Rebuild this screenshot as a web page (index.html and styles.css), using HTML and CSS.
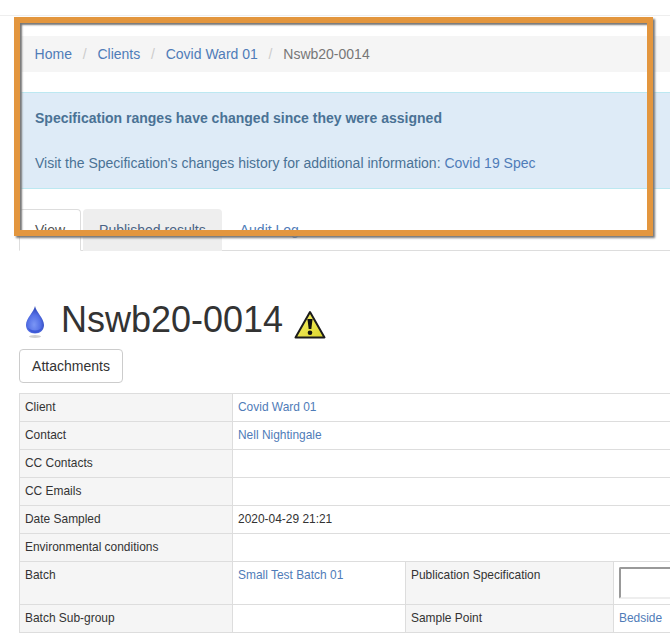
FILE: index.html
```html
<!DOCTYPE html>
<html>
<head>
<meta charset="utf-8" />
<title>Nswb20-0014</title>
<link rel="stylesheet" href="styles.css">
</head>
<body>
<div class="topline"></div>
<div class="content">
	<ol class="breadcrumb">
		<li><a href="#">Home</a></li>
		<li><a href="#">Clients</a></li>
		<li><a href="#">Covid Ward 01</a></li>
		<li class="active">Nswb20-0014</li>
	</ol>

	<div class="alert">
		<p class="alert-title">Specification ranges have changed since they were assigned</p>
		<p>Visit the Specification's changes history for additional information: <a href="#">Covid 19 Spec</a></p>
	</div>

	<ul class="tabs">
		<li class="on"><a href="#">View</a></li>
		<li class="grey"><a href="#">Published results</a></li>
		<li><a href="#">Audit Log</a></li>
	</ul>

	<h1 class="title">
		<svg class="drop" width="22" height="36" viewBox="0 0 22 36">
			<defs>
				<radialGradient id="dropfill" cx="0.45" cy="0.68" r="0.6">
					<stop offset="0" stop-color="#7b96f5" />
					<stop offset="0.6" stop-color="#5470e6" />
					<stop offset="1" stop-color="#2f48ba" />
				</radialGradient>
			</defs>
			<path d="M11 1 C12 7 20 13 20 20 C20 25 16 28.500 11 28.500 C6 28.500 2 25 2 20 C2 13 10 7 11 1 Z" fill="url(#dropfill)" />
			<path d="M3.500 22 C6 26.500 16 26.500 18.500 22 C17 26.500 14 28 11 28 C8 28 5 26.500 3.500 22 Z" fill="#3f5ad6" />
			<ellipse cx="11" cy="31.500" rx="6" ry="1.500" fill="#d0d0d0" />
		</svg>
		<span>Nswb20-0014</span>
		<svg class="warn" width="32" height="29" viewBox="0 0 32 29">
			<defs>
				<linearGradient id="warnfill" x1="0" y1="0" x2="1" y2="1">
					<stop offset="0" stop-color="#f7f06a" />
					<stop offset="1" stop-color="#dcd62c" />
				</linearGradient>
			</defs>
			<path d="M16 2 L30.500 27.500 L1.500 27.500 Z" fill="url(#warnfill)" stroke="#1c1c1c" stroke-width="2" stroke-linejoin="round" />
			<path d="M13.400 9 L18.600 9 L17.300 19 L14.700 19 Z" fill="#111" />
			<circle cx="16" cy="22.800" r="2.300" fill="#111" />
		</svg>
	</h1>

	<button class="btn">Attachments</button>

	<table class="fields">
		<colgroup><col class="c1" /><col class="c2" /><col class="c3" /><col /></colgroup>
		<tr><td class="lbl">Client</td><td colspan="3"><a href="#">Covid Ward 01</a></td></tr>
		<tr><td class="lbl">Contact</td><td colspan="3"><a href="#">Nell Nightingale</a></td></tr>
		<tr><td class="lbl">CC Contacts</td><td colspan="3"></td></tr>
		<tr><td class="lbl">CC Emails</td><td colspan="3"></td></tr>
		<tr><td class="lbl">Date Sampled</td><td colspan="3">2020-04-29 21:21</td></tr>
		<tr><td class="lbl">Environmental conditions</td><td colspan="3"></td></tr>
		<tr><td class="lbl">Batch</td><td><a href="#">Small Test Batch 01</a></td><td class="lbl">Publication Specification</td><td><input class="box" type="text" /></td></tr>
		<tr><td class="lbl">Batch Sub-group</td><td></td><td class="lbl">Sample Point</td><td><a href="#">Bedside</a></td></tr>
	</table>
</div>

<!-- orange box drawn on top of the screenshot -->
<div class="callout"></div>
</body>
</html>
```

FILE: styles.css
```css
html, body {
	margin: 0;
	height: 633px;
	overflow: hidden;
}
body {
	position: relative;
	background-color: #fff;
	font-family: "Liberation Sans", Arial, sans-serif;
	font-size: 14px;
	line-height: 20px;
	color: #333;
}
a {
	color: #4f7cb8;
	text-decoration: none;
}

.topline {
	height: 15px;
	border-bottom: 1px solid #eee;
}
.content {
	width: 860px;
	margin-left: 19px;
	padding-top: 20px;
}

.breadcrumb {
	display: flex;
	list-style: none;
	margin: 0 0 20px;
	padding: 8px 15.6px;
	height: 20px;
	background: #f5f5f5;
}
.breadcrumb li + li:before {
	content: "/";
	padding: 0 10.8px;
	color: #ccc;
}
.breadcrumb .active {
	color: #777;
}

.alert {
	height: 95px;
	background: #deebf7;
	border-top: 1px solid #bce8f1;
	border-bottom: 1px solid #bce8f1;
	color: #4a7295;
	padding: 0 16px;
}
.alert p {
	margin: 0;
}
.alert .alert-title {
	font-weight: bold;
	padding-top: 15px;
	margin-bottom: 25px;
}

.tabs {
	display: flex;
	list-style: none;
	margin: 20px 0 0;
	padding: 0;
	height: 41px;
	border-bottom: 1px solid #ddd;
}
.tabs li {
	margin-right: 2px;
	height: 42px;
}
.tabs li a {
	display: block;
	box-sizing: border-box;
	height: 42px;
	padding: 10px 15px;
	line-height: 20px;
	border: 1px solid transparent;
	border-radius: 4px 4px 0 0;
}
.tabs li.on a {
	color: #555;
	background: #fff;
	border-color: #ddd #ddd #fff;
}
.tabs li.grey a {
	color: #4a6385;
	background: #eee;
}

.title {
	display: flex;
	align-items: center;
	margin: 0;
	height: 40px;
	padding-top: 49px;
	font-size: 36px;
	font-weight: normal;
	line-height: 40px;
}
.title .drop {
	margin-left: 5px;
	margin-top: 6px;
}
.title span {
	margin-left: 15px;
}
.title .warn {
	margin-left: 11px;
	margin-top: 8px;
}

.btn {
	display: block;
	box-sizing: border-box;
	width: 104px;
	height: 34px;
	margin: 9px 0 10px;
	padding: 0;
	background: #fff;
	border: 1px solid #ccc;
	border-radius: 4px;
	color: #333;
	font-family: inherit;
	font-size: 14px;
}

.fields {
	table-layout: fixed;
	width: 800px;
	border-collapse: collapse;
	font-size: 11.95px;
	line-height: 17px;
}
.c1 {
	width: 213px;
}
.c2 {
	width: 173px;
}
.c3 {
	width: 208px;
}
.fields td {
	height: 17px;
	padding: 5px;
	border: 1px solid #ddd;
	vertical-align: top;
}
.fields .lbl {
	background: #f5f5f5;
}
.box {
	display: block;
	box-sizing: border-box;
	width: 120px;
	height: 32px;
	margin: 0;
	background: #fff;
	border: 2px solid;
	border-color: #999 #eee #eee #999;
	border-radius: 2px;
}

.callout {
	position: absolute;
	left: 14px;
	top: 17px;
	box-sizing: border-box;
	width: 639px;
	height: 219px;
	border: 6px solid #e3963e;
	box-shadow: 2px 2px 2px #777, inset 2px 2px 2px #777;
}
```
